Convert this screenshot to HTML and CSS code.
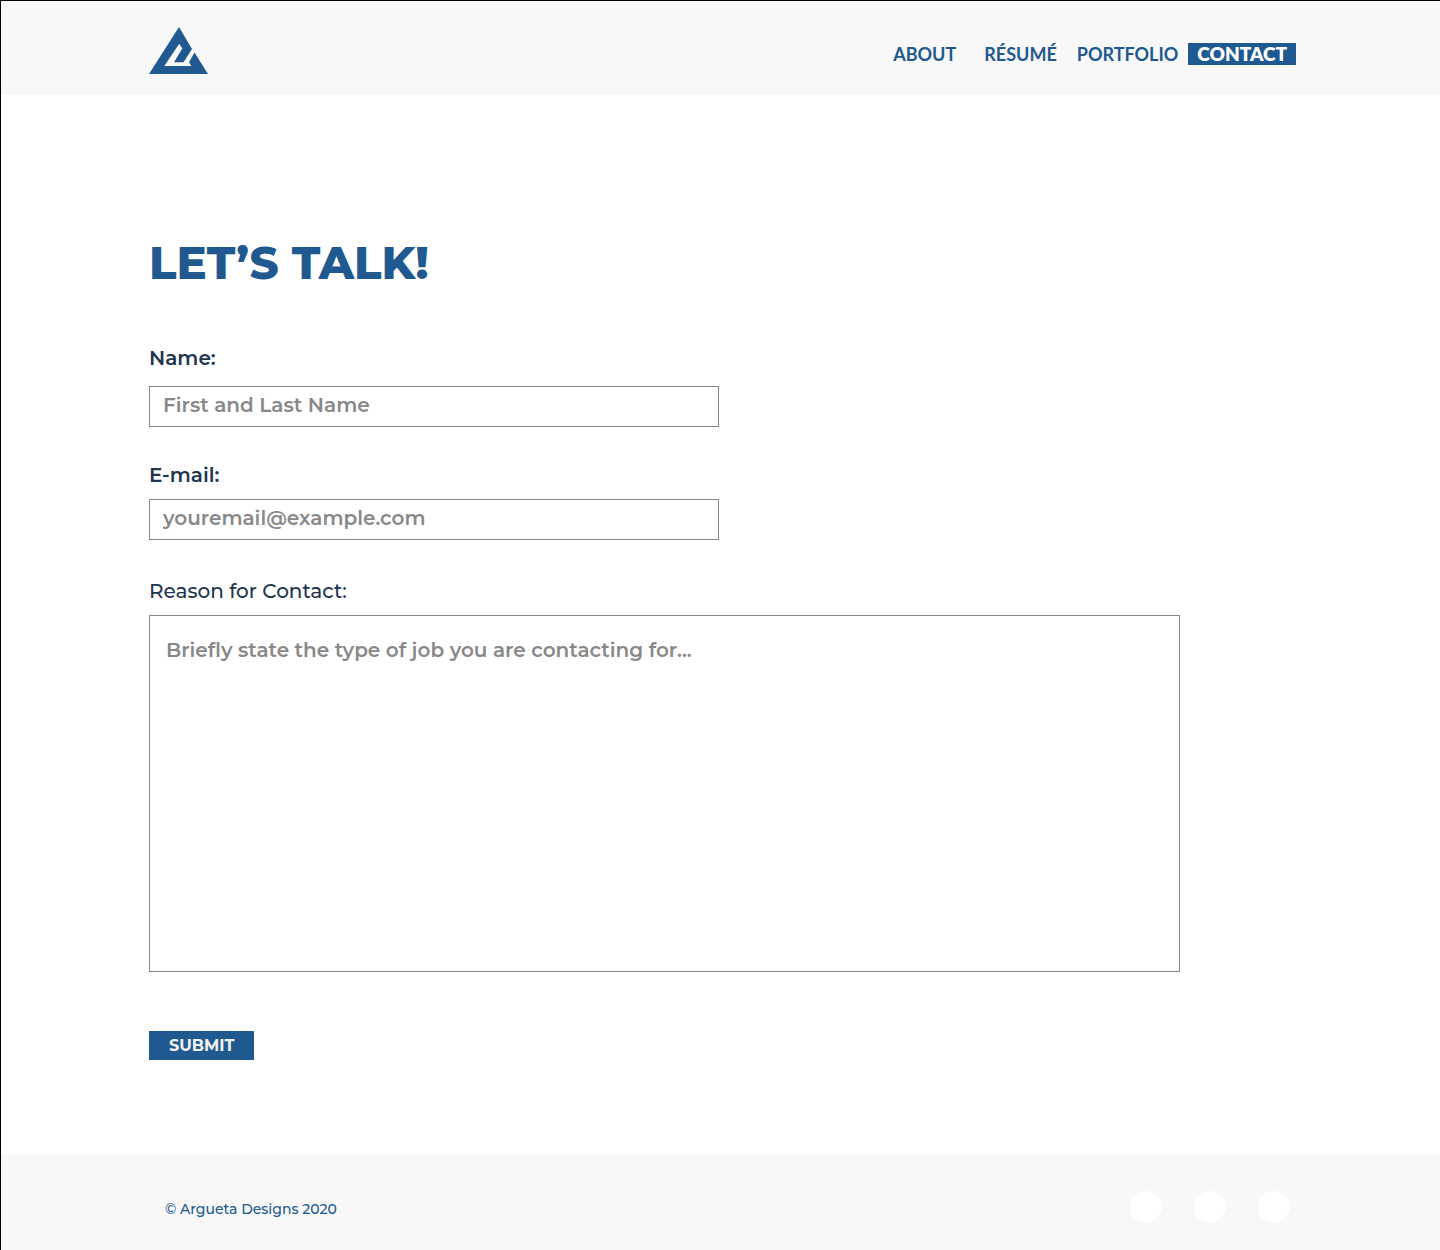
FILE: index.html
```html
<!DOCTYPE html>
<html lang="en">
<head>
  <meta charset="utf-8">
  <meta name="viewport" content="width=device-width, initial-scale=1">
  <title>Contact | Argueta Designs</title>
  <link rel="stylesheet" href="styles.css">
</head>
<body>
  <header class="site-header">
    <a class="logo" href="#" aria-label="Argueta Designs">
      <svg width="59" height="47" viewBox="0 0 59 47" aria-hidden="true">
        <path fill="currentColor" d="M30 0 43 22 34.5 35.2H25L33.3 21.5 30.2 16.7 15.3 39H42.3L40 35.2 45.5 25.5 59 47H0Z"/>
      </svg>
    </a>
    <nav class="nav">
      <a class="nav-link nav-link-wide" href="#">ABOUT</a>
      <a class="nav-link" href="#">RÉSUMÉ</a>
      <a class="nav-link" href="#">PORTFOLIO</a>
      <a class="nav-link nav-link-active" href="#" aria-current="page">CONTACT</a>
    </nav>
  </header>

  <main class="main">
    <h1 class="title">LET’S TALK!</h1>
    <form class="form">
      <div class="field field-name">
        <label class="label" for="name">Name:</label>
        <input class="control" id="name" type="text" placeholder="First and Last Name">
      </div>
      <div class="field">
        <label class="label" for="email">E-mail:</label>
        <input class="control" id="email" type="email" placeholder="youremail@example.com">
      </div>
      <div class="field">
        <label class="label label-light" for="reason">Reason for Contact:</label>
        <textarea class="control control-area" id="reason" placeholder="Briefly state the type of job you are contacting for..."></textarea>
      </div>
      <button class="submit" type="submit">SUBMIT</button>
    </form>
  </main>

  <footer class="site-footer">
    <p class="copyright">© Argueta Designs 2020</p>
    <div class="social">
      <a class="social-link" href="#" aria-label="Social profile 1"></a>
      <a class="social-link" href="#" aria-label="Social profile 2"></a>
      <a class="social-link" href="#" aria-label="Social profile 3"></a>
    </div>
  </footer>
</body>
</html>
```
FILE: styles.css
```css
* {
  box-sizing: border-box;
}

body {
  display: flex;
  flex-direction: column;
  min-height: 100vh;
  margin: 0;
  border-top: 1px solid #000;
  border-left: 1px solid #000;
  background: #fff;
  color: #20598f;
  font-family: Montserrat, Inter, sans-serif;
}

.site-header {
  display: flex;
  align-items: center;
  justify-content: space-between;
  padding: 26px 144px 21px 148px;
  background: #f8f8f8;
}

.logo {
  display: flex;
  color: inherit;
}

.nav {
  display: flex;
  gap: 10px;
  margin-top: 6px;
}

.nav-link {
  padding: 0 0 0 10px;
  color: inherit;
  font: 700 18px/22px "Gill Sans", Lato, sans-serif;
  text-decoration: none;
}

.nav-link-wide {
  padding-right: 8px;
}

.nav-link-active {
  padding: 0 9px;
  background: #20598f;
  color: #fff;
  font-size: 19px;
  font-weight: 800;
}

.main {
  flex: 1;
  padding: 141px 148px 95px;
}

.title {
  margin: 0 0 56px;
  font-size: 45px;
  font-weight: 800;
  line-height: 54px;
}

.form {
  display: flex;
  flex-direction: column;
  align-items: flex-start;
  max-width: 1031px;
}

.field {
  display: flex;
  flex-direction: column;
  gap: 12px;
  width: 100%;
  margin-bottom: 39px;
}

.field-name {
  gap: 16px;
  margin-bottom: 36px;
}

.label {
  color: #22354f;
  font-size: 20px;
  font-weight: 600;
  line-height: 24px;
}

.label-light {
  font-weight: 500;
}

.control {
  width: 100%;
  max-width: 570px;
  height: 41px;
  padding: 0 13px 4px;
  border: 1px solid #888;
  border-radius: 0;
  background: #fff;
  color: #22354f;
  font: inherit;
  font-size: 20px;
  font-weight: 600;
  line-height: 24px;
}

.control::placeholder {
  color: #888;
  opacity: 1;
}

.control-area {
  max-width: none;
  height: 357px;
  padding: 22px 16px;
  resize: none;
}

.submit {
  margin-top: 20px;
  padding: 0 20px;
  border: 0;
  background: #20598f;
  color: #f0f0f0;
  font: inherit;
  font-size: 16px;
  font-weight: 700;
  line-height: 29px;
}

.site-footer {
  display: flex;
  align-items: center;
  justify-content: space-between;
  padding: 36px 150px 27px 164px;
  background: #f8f8f8;
}

.copyright {
  margin: 4px 0 0;
  font-size: 14px;
  font-weight: 500;
  line-height: 20px;
}

.social {
  display: flex;
  gap: 32px;
}

.social-link {
  width: 32px;
  height: 32px;
  border-radius: 50%;
  background: #fff;
}
```
